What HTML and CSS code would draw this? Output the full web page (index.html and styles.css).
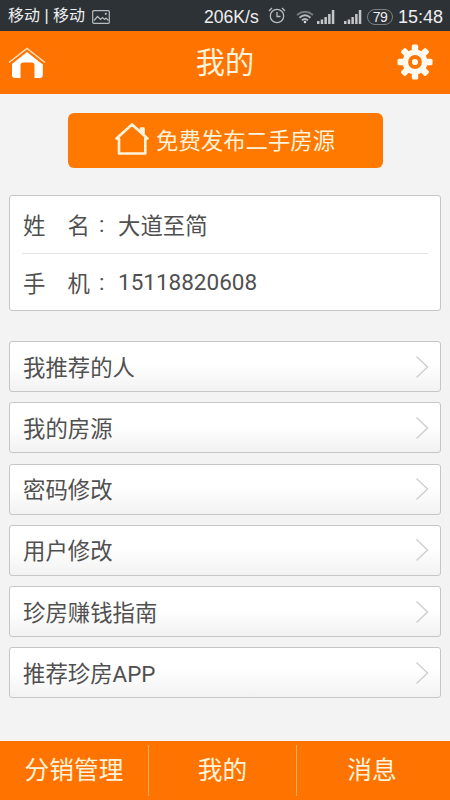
FILE: index.html
```html
<!DOCTYPE html>
<html lang="zh-CN">
<head>
<meta charset="utf-8">
<title>我的</title>
<link rel="stylesheet" href="styles.css">
</head>
<body>
<div class="status">
  <span class="carrier">移动 | 移动</span>
  <svg class="picture" width="18" height="14" viewBox="0 0 18 14" fill="none" stroke="#b9bdc0" stroke-width="1.2"><rect x=".7" y=".7" width="16.6" height="12.6" rx="1"/><path d="M2 10.500l3.500-4 3 3 2-2 2 2 1.500-1.500 2.500 2.500"/><circle cx="13.800" cy="3.800" r=".5"/></svg>
  <span class="speed">206K/s</span>
  <svg class="alarm" width="18" height="17" viewBox="0 0 18 17" fill="none" stroke="#b9bdc0" stroke-width="1.300"><circle cx="9" cy="9" r="6.700"/><path d="M9 5v4.500h3.500M1 4l3-3M17 4l-3-3"/></svg>
  <svg class="wifi" width="18" height="14" viewBox="0 0 18 14" fill="none" stroke-width="1.900"><path stroke="#777c80" d="M1 5Q9-1.500 17 5"/><path stroke="#b9bdc0" d="M3.500 7.700Q9 3 14.500 7.700M6 10.300Q9 7.700 12 10.300"/><circle cx="9" cy="12" r="1.300" fill="#ddd"/></svg>
  <svg class="signal" width="18" height="14" viewBox="0 0 18 14" fill="#c4c6c8"><path d="M0 11h2.500v3H0zM3.700 9.500h2.500V14H3.700zM7.400 7h2.500v7H7.400zM11.100 4h2.500v10h-2.500zM14.800 0h2.500v14h-2.500z"/></svg>
  <svg class="signal second" width="18" height="14" viewBox="0 0 18 14" fill="#c4c6c8"><path d="M0 11h2.500v3H0zM3.700 9.500h2.500V14H3.700zM7.400 7h2.500v7H7.400zM11.100 4h2.500v10h-2.500zM14.800 0h2.500v14h-2.500z"/></svg>
  <span class="battery">79</span>
  <span class="clock">15:48</span>
</div>
<header class="header">
  <svg width="38" height="32" viewBox="0 0 38 32"><path d="M1 15.500L19 1.500l18 14" fill="none" stroke="#ffe2c2" stroke-width="1.400"/><path fill="#fff" d="M5.500 15.800L19 5l13.500 10.800 2.300 1.500V28q0 3-3 3H26.500V18.500q0-3-3-3h-8q-3 0-3 3V31H7q-3 0-3-3V17z"/></svg>
  <h1>我的</h1>
  <svg class="gear" width="36" height="36" viewBox="-18 -18 36 36"><g fill="#fffaf0"><g id="teeth"><rect x="-3.200" y="-17.500" width="6.400" height="35" rx="1.500"/><rect x="-17.500" y="-3.200" width="35" height="6.400" rx="1.500"/></g><use href="#teeth" transform="rotate(45)"/><circle r="12.500"/></g><circle r="5" fill="#fffaf0" stroke="#ff7400" stroke-width="3.800"/></svg>
</header>
<main class="main">
  <a class="publish"><svg width="34" height="32" viewBox="0 0 34 32" fill="none" stroke="#fff3dc" stroke-width="2.600" stroke-linejoin="round" stroke-linecap="round"><path d="M1.500 15.500L17 1.500l15.500 14h-2.200V30.500H4v-15zM26 9V5.500h2.500v6"/></svg><span>免费发布二手房源</span></a>
  <section class="card">
    <div class="field"><span class="label"><span>姓</span><span>名</span></span><span class="colon">:</span><span>大道至简</span></div>
    <div class="field"><span class="label"><span>手</span><span>机</span></span><span class="colon">:</span><span class="phone">15118820608</span></div>
  </section>
  <nav class="menu">
    <a><span>我推荐的人</span><svg width="14" height="24" viewBox="0 0 14 24"><path d="M1.500 1.500L12.500 12l-11 10.500"/></svg></a>
    <a><span>我的房源</span><svg width="14" height="24" viewBox="0 0 14 24"><path d="M1.500 1.500L12.500 12l-11 10.500"/></svg></a>
    <a><span>密码修改</span><svg width="14" height="24" viewBox="0 0 14 24"><path d="M1.500 1.500L12.500 12l-11 10.500"/></svg></a>
    <a><span>用户修改</span><svg width="14" height="24" viewBox="0 0 14 24"><path d="M1.500 1.500L12.500 12l-11 10.500"/></svg></a>
    <a><span>珍房赚钱指南</span><svg width="14" height="24" viewBox="0 0 14 24"><path d="M1.500 1.500L12.500 12l-11 10.500"/></svg></a>
    <a><span>推荐珍房APP</span><svg width="14" height="24" viewBox="0 0 14 24"><path d="M1.500 1.500L12.500 12l-11 10.500"/></svg></a>
  </nav>
</main>
<footer class="tabs"><a>分销管理</a><a>我的</a><a>消息</a></footer>
</body>
</html>
```
FILE: styles.css
```css
* { box-sizing: border-box; }
body {
  margin: 0;
  height: 800px;
  display: flex;
  flex-direction: column;
  overflow: hidden;
  background: #f3f3f3;
  color: #505050;
  font-family: Roboto, "Noto Sans CJK SC", sans-serif;
  font-size: 22.4px;
}
svg { display: block; flex: none; }
.status {
  height: 31px;
  flex: none;
  display: flex;
  align-items: center;
  padding: 2px 7px 0 8px;
  background: #2d3237;
  color: #eee;
  font-family: "Liberation Sans", "Noto Sans CJK SC", sans-serif;
  font-size: 18px;
  line-height: 28px;
  white-space: nowrap;
}
.carrier { width: 78px; padding-bottom: 2px; font-size: 16px; }
.picture { margin-left: 6px; }
.speed { margin-left: auto; width: 55px; font-size: 17.6px; }
.alarm { margin-left: 9px; margin-bottom: 2px; }
.wifi { margin-left: 10px; }
.signal { margin-left: 3px; }
.second { margin-left: 9px; }
.battery {
  width: 26px;
  height: 16px;
  margin-left: 5px;
  border: 1px solid #7b8085;
  border-radius: 8px;
  font-size: 14px;
  line-height: 15px;
  text-align: center;
  letter-spacing: -.5px;
}
.clock { width: 45px; margin-left: 5px; }
.header {
  height: 63px;
  flex: none;
  display: flex;
  align-items: center;
  justify-content: space-between;
  padding: 0 17px 0 8px;
  background: #ff7400;
}
.gear { margin-bottom: 2px; }
h1 {
  margin: 0 0 0 7px;
  color: #fff3dc;
  font-size: 29.2px;
  font-weight: 400;
  line-height: 40px;
}
.main { flex: 1; padding: 18.500px 9px 0; }
.publish {
  width: 315px;
  height: 55px;
  margin: 0 auto;
  display: flex;
  align-items: center;
  padding: 0 0 3px 47.500px;
  gap: 7px;
  border-radius: 6px;
  background: #ff7800;
  color: #fff3dc;
}
.card {
  height: 116px;
  margin-top: 27.500px;
  padding: 0 12px;
  border: 1px solid #c6c6c6;
  border-radius: 3px;
  background: #fff;
}
.field { height: 57px; padding: 0 1px 1px; display: flex; align-items: center; }
.field + .field { border-top: 1px solid #e4e4e4; }
.label { width: 67px; display: flex; justify-content: space-between; }
.colon { width: 28px; padding-left: 9px; }
.phone { font-size: 22.5px; }
.menu { margin-top: 30px; display: grid; gap: 10.25px; }
.menu a {
  height: 51px;
  display: flex;
  align-items: center;
  justify-content: space-between;
  padding: 0 11px 0 13px;
  border: 1px solid #c6c6c6;
  border-radius: 3px;
  background: linear-gradient(#fff 45%, #f2f2f2);
}
.menu span { padding-bottom: 2px; }
.menu path { fill: none; stroke: #d0d0d0; stroke-width: 1.5; }
.tabs {
  height: 59px;
  flex: none;
  display: grid;
  grid-template-columns: 148px 148px 1fr;
  padding: 4px 0;
  background: #ff7400;
  color: #fff3dc;
  font-size: 24.7px;
}
.tabs a { padding-bottom: 5px; display: flex; align-items: center; justify-content: center; }
.tabs a:last-child { padding-right: 3px; }
.tabs a + a { border-left: 1px solid #ffac60; }
```
